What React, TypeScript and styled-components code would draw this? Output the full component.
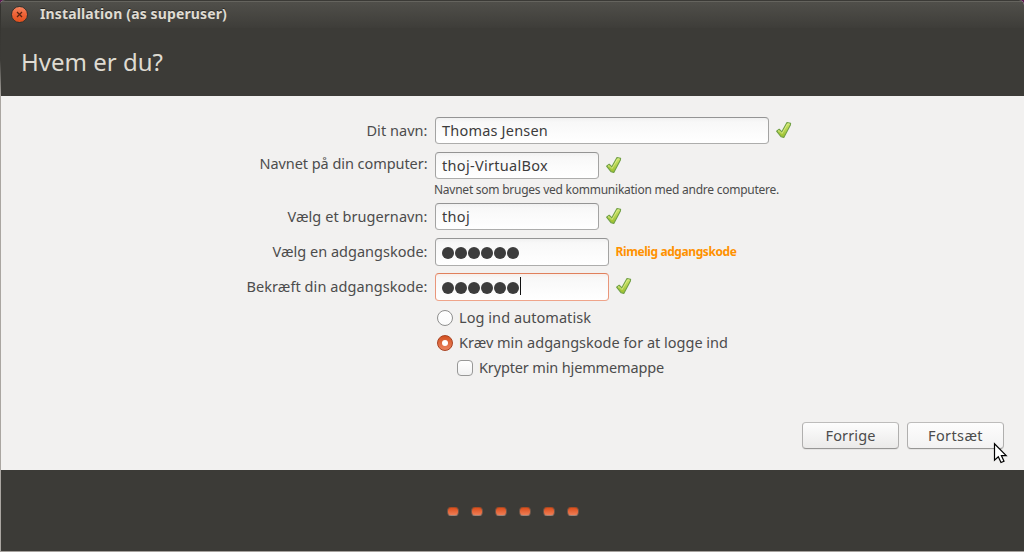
import React from "react";
import styled, { createGlobalStyle, css } from "styled-components";

const GlobalStyle = createGlobalStyle`
  *, *::before, *::after { box-sizing: border-box; }
  html, body { margin: 0; padding: 0; overflow: hidden; }
  body {
    background: #5c1a50;
    font-family: "Noto Sans", "Open Sans", sans-serif;
    font-size: 14.5px;
    color: #4c4c4c;
  }
`;

const Window = styled.div`
  position: relative;
  display: flex;
  flex-direction: column;
  width: 1024px;
  height: 552px;
  overflow: hidden;
  border-radius: 5px 5px 0 0;
  background: #f2f1f0;
`;

const WindowEdge = styled.div`
  position: absolute;
  inset: 0;
  pointer-events: none;
  border-bottom: 1px solid #a5a19d;
  &::before {
    content: "";
    position: absolute;
    left: 0;
    top: 0;
    bottom: 0;
    width: 1px;
    background: linear-gradient(#33322e 0, #3c3b37 60px, #aaa6a1 96px, #aaa6a1 100%);
  }
`;

const TitleBar = styled.header`
  display: flex;
  align-items: center;
  flex: 0 0 28px;
  gap: 12px;
  padding: 0 0 1px 11px;
  border-top: 1px solid #3b3a36;
  background: linear-gradient(#65645e 0, #65645e 1px, #504f4a 1px, #3e3d39 100%);
`;

const CloseButton = styled.button`
  display: grid;
  place-items: center;
  width: 17px;
  height: 17px;
  padding: 0;
  border: 1px solid #33322d;
  border-radius: 50%;
  background: linear-gradient(#f5845f, #ee6236 50%, #e2501d);
`;

const Text = styled.span<{ $spacing?: number }>`
  white-space: nowrap;
  letter-spacing: ${({ $spacing = 0 }) => $spacing}px;
`;

const WindowTitle = styled(Text)`
  font-size: 14px;
  line-height: 20px;
  font-weight: 700;
  color: #dfdbd2;
  text-shadow: 0 -1px 0 #2b2a27;
`;

const PageHeader = styled.div`
  flex: 0 0 68px;
  padding: 17px 0 0 21px;
  background: #3c3b37;
`;

const PageTitle = styled.h1`
  margin: 0;
  font-size: 24px;
  line-height: 34px;
  font-weight: 400;
  color: #dfdbd2;
`;

const Content = styled.main`
  display: flex;
  flex-direction: column;
  justify-content: space-between;
  flex: 1;
  padding: 21px 20px 21px 0;
`;

const Form = styled.form`
  display: flex;
  flex-direction: column;
`;

const Row = styled.div<{ $height: number; $gap: number }>`
  display: grid;
  grid-template-columns: 427.5px auto 1fr;
  column-gap: 7.5px;
  align-items: center;
  height: ${({ $height }) => $height}px;
  margin-bottom: ${({ $gap }) => $gap}px;
`;

const Label = styled(Text)<{ $raise?: number }>`
  text-align: right;
  line-height: 20px;
  padding-bottom: ${({ $raise = 0 }) => $raise + 2}px;
`;

const Field = styled.div<{ $width: number; $focus?: boolean }>`
  display: flex;
  align-items: center;
  width: ${({ $width }) => $width}px;
  height: 100%;
  padding: 0 0 2px 6px;
  border: 1px solid;
  border-color: #949494 #a3a3a2 #adadac;
  border-radius: 4px;
  background: linear-gradient(#f1f1f1, #f8f8f8 4px, #fff);
  color: #3c3c3c;
  ${({ $focus }) =>
    $focus &&
    css`
      border-color: #e0805c #e9967a #efa48a;
      background: linear-gradient(#f8eeea, #f8f8f8 4px, #fff);
    `}
`;

const Dots = styled.div`
  display: flex;
  gap: 1px;
  padding: 4px 1px 0 0;
`;

const Dot = styled.i`
  width: 12px;
  height: 12px;
  border-radius: 50%;
  background: #3c3c3c;
`;

const Caret = styled.i`
  width: 1px;
  height: 18px;
  background: #111;
`;

const Hint = styled(Text)`
  margin: -5px 0 5px 434px;
  font-size: 12px;
  line-height: 16px;
`;

const Strength = styled(Text)`
  margin-left: -1px;
  font-size: 12px;
  line-height: 16px;
  font-weight: 700;
  color: #ff9100;
`;

const Option = styled.label<{ $indent?: number }>`
  display: flex;
  align-items: center;
  gap: 6px;
  height: 25px;
  padding-left: ${({ $indent = 0 }) => 437 + $indent}px;
  line-height: 20px;
  ${Text} {
    padding-bottom: 2px;
  }
`;

const Radio = styled.span<{ $checked?: boolean }>`
  display: grid;
  place-items: center;
  width: 16px;
  height: 16px;
  border: 1px solid #8f8f8e;
  border-radius: 50%;
  background: linear-gradient(#fff, #fbfbfb);
  ${({ $checked }) =>
    $checked &&
    css`
      border-color: #a9411f;
      background: linear-gradient(#d4501f, #ea8460);
      &::after {
        content: "";
        width: 6px;
        height: 6px;
        border-radius: 50%;
        background: #fff;
      }
    `}
`;

const CheckBox = styled.span`
  width: 16px;
  height: 16px;
  border: 1px solid #989897;
  border-radius: 4px;
  background: linear-gradient(#fff, #f2f2f2);
`;

const Actions = styled.div`
  display: flex;
  justify-content: flex-end;
  gap: 8px;
`;

const Button = styled.button<{ $hover?: boolean }>`
  width: 97px;
  height: 27px;
  padding: 0 0 2px;
  border: 1px solid;
  border-color: #bdbcbb #b0afae #979695;
  border-radius: 4px;
  background: linear-gradient(#fdfdfd, ${({ $hover }) => ($hover ? "#f3f2f2" : "#ebeae9")});
  box-shadow: 0 1px 0 rgba(0, 0, 0, 0.05);
  font: inherit;
  line-height: 20px;
  color: #4c4c4c;
`;

const Footer = styled.footer`
  display: flex;
  justify-content: center;
  gap: 12px;
  flex: 0 0 82px;
  padding: 37px 0 0 2px;
  background: #3c3b37;
`;

const Step = styled.i`
  width: 12px;
  height: 9px;
  border: 1px solid #6e5548;
  border-top-color: #a84a23;
  border-bottom-color: #9c8175;
  border-radius: 4px;
  background: linear-gradient(#dd4f1c, #ee7e57);
`;

const Pointer = styled.svg`
  position: absolute;
  left: 993px;
  top: 442px;
`;

const TickIcon = styled.svg`
  margin: 0 0 2px -1.5px;
`;

const Tick = () => (
  <TickIcon width="18" height="18" viewBox="0 0 18 18">
    <defs>
      <linearGradient id="tick" x1="0" y1="0" x2="0" y2="1">
        <stop offset="0" stopColor="#cfe66c" />
        <stop offset="1" stopColor="#9bbf2d" />
      </linearGradient>
    </defs>
    <path
      d="M1.6 10.2 4.2 8.2 6.8 10.8 12 1.6 15.6 2.2 15.4 3.9 8.8 16.5 6.2 15.8Z"
      fill="url(#tick)"
      stroke="#71a046"
      strokeWidth="1.1"
      strokeLinejoin="round"
    />
    <path d="M3 10.2 4 9.5 7 12.5 12.7 2.7 14.3 2.9" fill="none" stroke="#e3f29a" strokeWidth=".7" />
  </TickIcon>
);

const Password = ({ focused }: { focused?: boolean }) => (
  <>
    <Dots>
      {Array.from({ length: 6 }, (_, i) => (
        <Dot key={i} />
      ))}
    </Dots>
    {focused && <Caret />}
  </>
);

export default function App() {
  return (
    <>
      <GlobalStyle />
      <Window>
        <TitleBar>
          <CloseButton aria-label="Luk">
            <svg width="7" height="7" viewBox="0 0 7 7">
              <path d="M1 1 6 6M6 1 1 6" stroke="#5a2411" strokeWidth="1.3" />
            </svg>
          </CloseButton>
          <WindowTitle $spacing={0.133}>Installation (as superuser)</WindowTitle>
        </TitleBar>
        <PageHeader>
          <PageTitle>Hvem er du?</PageTitle>
        </PageHeader>
        <Content>
          <Form>
            <Row $height={27} $gap={8}>
              <Label $spacing={0.04}>Dit navn:</Label>
              <Field $width={334}>
                <Text $spacing={0.2}>Thomas Jensen</Text>
              </Field>
              <Tick />
            </Row>
            <Row $height={27} $gap={8}>
              <Label $spacing={-0.058} $raise={4}>Navnet på din computer:</Label>
              <Field $width={164}>
                <Text $spacing={0.303}>thoj-VirtualBox</Text>
              </Field>
              <Tick />
            </Row>
            <Hint $spacing={-0.249}>Navnet som bruges ved kommunikation med andre computere.</Hint>
            <Row $height={27} $gap={8}>
              <Label $spacing={0.063}>Vælg et brugernavn:</Label>
              <Field $width={164}>
                <Text $spacing={0.323}>thoj</Text>
              </Field>
              <Tick />
            </Row>
            <Row $height={28} $gap={7}>
              <Label $spacing={0.015}>Vælg en adgangskode:</Label>
              <Field $width={174}>
                <Password />
              </Field>
              <Strength $spacing={-0.412}>Rimelig adgangskode</Strength>
            </Row>
            <Row $height={28} $gap={4}>
              <Label $spacing={0.068}>Bekræft din adgangskode:</Label>
              <Field $width={174} $focus>
                <Password focused />
              </Field>
              <Tick />
            </Row>
            <Option>
              <Radio />
              <Text $spacing={0.061}>Log ind automatisk</Text>
            </Option>
            <Option>
              <Radio $checked />
              <Text>Kræv min adgangskode for at logge ind</Text>
            </Option>
            <Option $indent={20}>
              <CheckBox />
              <Text $spacing={-0.146}>Krypter min hjemmemappe</Text>
            </Option>
          </Form>
          <Actions>
            <Button>
              <Text $spacing={0.127}>Forrige</Text>
            </Button>
            <Button $hover>
              <Text $spacing={0.396}>Fortsæt</Text>
            </Button>
          </Actions>
        </Content>
        <Footer>
          {Array.from({ length: 6 }, (_, i) => (
            <Step key={i} />
          ))}
        </Footer>
        <WindowEdge />
        <Pointer width="16" height="24" viewBox="0 0 16 24">
          <path
            d="M1.5 1.8V18.2L5.3 14.7 8 20.5 11 19.2 8.4 13.6H13.2Z"
            fill="#fff"
            stroke="#000"
            strokeWidth="1.2"
          />
        </Pointer>
      </Window>
    </>
  );
}
